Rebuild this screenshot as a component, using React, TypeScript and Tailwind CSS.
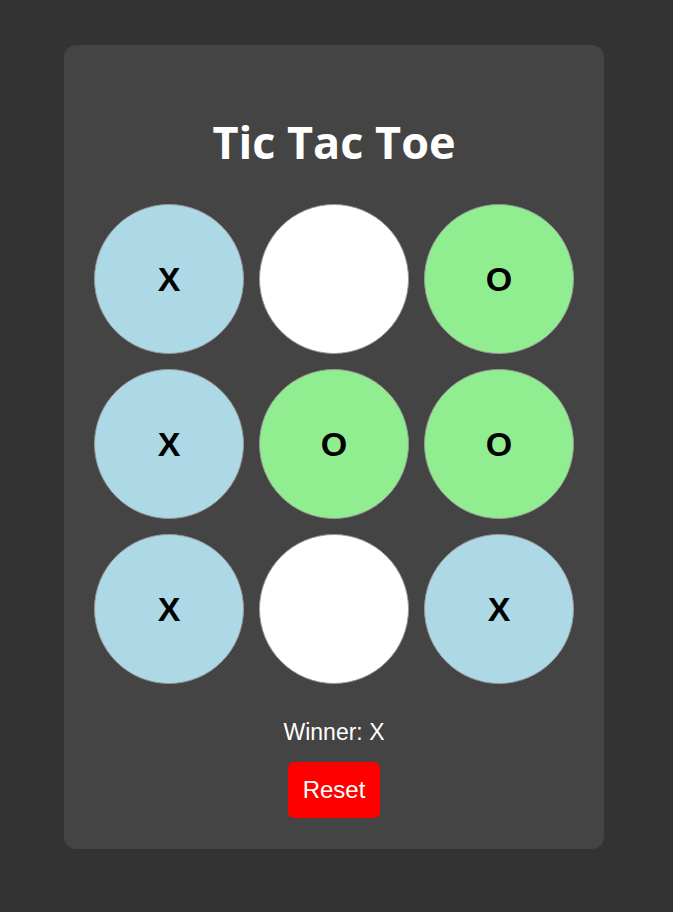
const board = ['X', '', 'O', 'X', 'O', 'O', 'X', '', 'X']

function Cell({ value }: { value: string }) {
  const bg = value === 'X' ? 'bg-[#add8e6]' : value === 'O' ? 'bg-[#90ee90]' : 'bg-white'
  return (
    <div
      className={`w-[150px] h-[150px] rounded-full border border-[#999] flex items-center justify-center text-[34px] font-bold text-black font-['Liberation_Sans',Arial,sans-serif] ${bg}`}
    >
      {value}
    </div>
  )
}

export default function App() {
  return (
    <div className="min-h-[912px] bg-[#333] pt-[45px] pl-[64px]">
      <div className="w-[540px] h-[804px] bg-[#444] rounded-xl px-[30px] flex flex-col items-center">
        <h1 className="mt-[69px] mb-[34px] text-[45px] leading-[56px] font-bold text-white font-['Open_Sans',sans-serif]">
          Tic Tac Toe
        </h1>
        <div className="grid grid-cols-3 gap-[15px]">
          {board.map((v, i) => (
            <Cell key={i} value={v} />
          ))}
        </div>
        <p className="mt-[35px] text-[23px] leading-[26px] text-white font-['Liberation_Sans',Arial,sans-serif]">
          Winner: X
        </p>
        <button className="mt-[17px] w-[92px] h-[56px] bg-[#f00] rounded-md text-white text-[24px] font-['Liberation_Sans',Arial,sans-serif]">
          Reset
        </button>
      </div>
    </div>
  )
}
